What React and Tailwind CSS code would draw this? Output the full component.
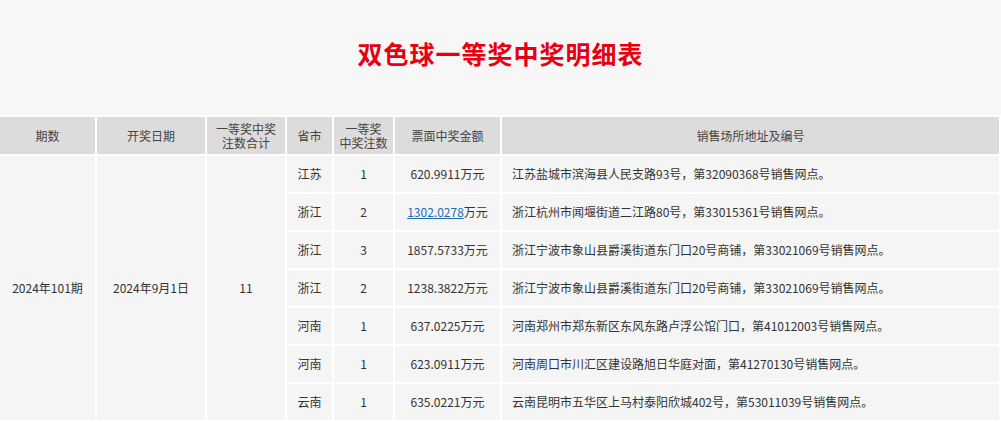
export default function App() {
  const rows = [
    ["江苏","1","620.9911万元","江苏盐城市滨海县人民支路93号，第32090368号销售网点。"],
    ["浙江","2","LINK","浙江杭州市闻堰街道二江路80号，第33015361号销售网点。"],
    ["浙江","3","1857.5733万元","浙江宁波市象山县爵溪街道东门口20号商铺，第33021069号销售网点。"],
    ["浙江","2","1238.3822万元","浙江宁波市象山县爵溪街道东门口20号商铺，第33021069号销售网点。"],
    ["河南","1","637.0225万元","河南郑州市郑东新区东风东路卢浮公馆门口，第41012003号销售网点。"],
    ["河南","1","623.0911万元","河南周口市川汇区建设路旭日华庭对面，第41270130号销售网点。"],
    ["云南","1","635.0221万元","云南昆明市五华区上马村泰阳欣城402号，第53011039号销售网点。"],
  ];
  const td = "border-2 border-white text-center text-[12px] text-[#333] h-[38px]";
  const th = "border-2 border-white bg-[#dcdcdc] text-center font-normal text-[12px] text-[#444] leading-[14px] h-[39px] p-0";
  return (
    <div className="w-[1001px] h-[422px] overflow-hidden bg-[#f7f7f7]" style={{fontFamily: '"Microsoft YaHei","Noto Sans CJK SC",sans-serif'}}>
      <div className="h-[115px] flex items-center justify-center pb-[8px]">
        <h1 className="text-[25px] font-bold text-[#e60012] tracking-[1px]">双色球一等奖中奖明细表</h1>
      </div>
      <table className="border-collapse w-[1003px] -ml-[2px] table-fixed">
        <colgroup>
          <col className="w-[97px]" /><col className="w-[110px]" /><col className="w-[80px]" />
          <col className="w-[47px]" /><col className="w-[61px]" /><col className="w-[107px]" /><col />
        </colgroup>
        <thead>
          <tr>
            <th className={th}>期数</th>
            <th className={th}>开奖日期</th>
            <th className={th}>一等奖中奖<br/>注数合计</th>
            <th className={th}>省市</th>
            <th className={th}>一等奖<br/>中奖注数</th>
            <th className={th}>票面中奖金额</th>
            <th className={th}>销售场所地址及编号</th>
          </tr>
        </thead>
        <tbody>
          {rows.map((r, i) => (
            <tr key={i} className="bg-[#f5f5f5]">
              {i === 0 && <>
                <td rowSpan={7} className={td}>2024年101期</td>
                <td rowSpan={7} className={td}>2024年9月1日</td>
                <td rowSpan={7} className={td}>11</td>
              </>}
              <td className={td}>{r[0]}</td>
              <td className={td}>{r[1]}</td>
              <td className={td}>{r[2] === "LINK" ? <><span className="text-[#1a6fb5] underline">1302.0278</span>万元</> : r[2]}</td>
              <td className={td + " text-left pl-[10px]"}>{r[3]}</td>
            </tr>
          ))}
        </tbody>
      </table>
    </div>
  );
}
